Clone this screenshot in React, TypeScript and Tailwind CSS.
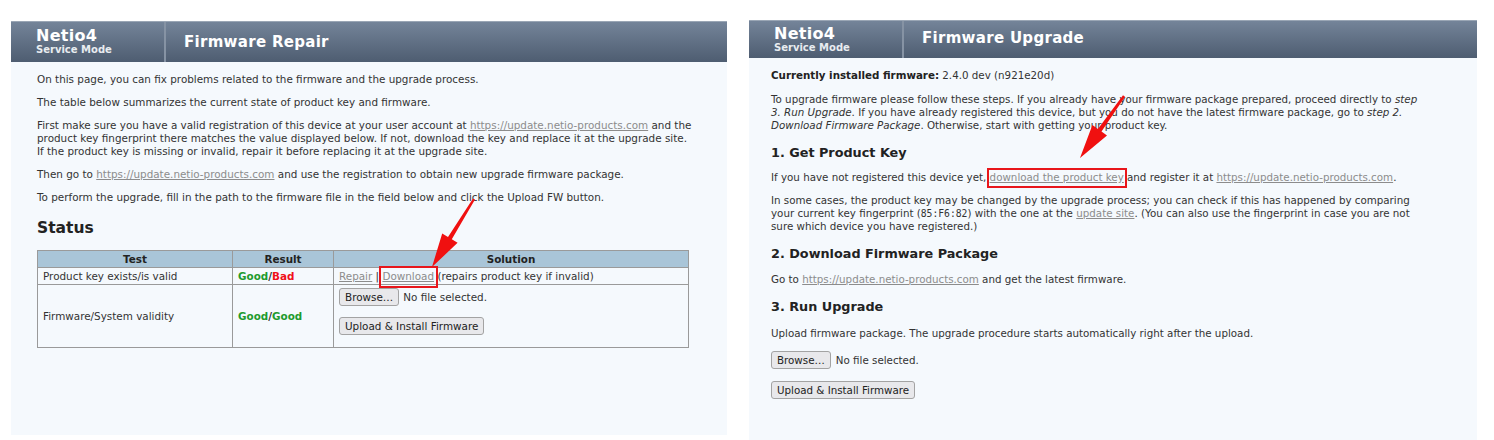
import React from "react";

const link = "text-[#8c8c8c] underline";
const btn =
  "inline-flex items-center h-[18px] px-[5px] border border-[#a3a3a3] rounded-[3px] bg-[#e8e8eb] text-[#222] leading-none";

function Header({ title, h, tpad }: { title: string; h: string; tpad: string }) {
  return (
    <div
      className={`flex ${h} bg-gradient-to-b from-[#748499] to-[#4e5d71] border-t border-[#9aa6b5] text-white`}
    >
      <div className="w-[155px] pl-[25px] flex flex-col justify-center border-r-2 border-[#8693a4]">
        <div className="text-[16px] font-bold leading-[16px] tracking-[0.3px]">Netio4</div>
        <div className="text-[10px] font-bold leading-[12px] text-[#e8ecf0]">Service Mode</div>
      </div>
      <div className={`flex items-center pl-[18px] text-[15px] font-bold tracking-[0.3px] ${tpad}`}>
        {title}
      </div>
    </div>
  );
}

function Boxed({ children, cls }: { children: React.ReactNode; cls: string }) {
  return (
    <span className="relative">
      {children}
      <span className={`absolute border-2 border-[#e8161b] ${cls}`} />
    </span>
  );
}

export default function App() {
  return (
    <div className="relative w-[1494px] h-[440px] bg-white flex font-['DejaVu_Sans',sans-serif] text-[10.4px] leading-[13px] text-[#333]">
      {/* Left panel */}
      <div className="ml-[11px] mt-[21px] w-[716px] h-[414px] bg-[#f5f9fd] flex flex-col">
        <Header title="Firmware Repair" h="h-[41px]" tpad="" />
        <div className="pl-[26px] pt-[11px] flex flex-col gap-[10px]">
          <p>On this page, you can fix problems related to the firmware and the upgrade process.</p>
          <p>The table below summarizes the current state of product key and firmware.</p>
          <p>
            First make sure you have a valid registration of this device at your user account at{" "}
            <span className={link}>https://update.netio-products.com</span> and the
            <br />
            product key fingerprint there matches the value displayed below. If not, download the key and replace it at the upgrade site.
            <br />
            If the product key is missing or invalid, repair it before replacing it at the upgrade site.
          </p>
          <p>
            Then go to <span className={link}>https://update.netio-products.com</span> and use the registration to obtain new upgrade firmware package.
          </p>
          <p>To perform the upgrade, fill in the path to the firmware file in the field below and click the Upload FW button.</p>
          <h2 className="text-[15.5px] font-bold leading-[18px] text-[#222] mt-[5px]">Status</h2>
          <table className="mt-[3px] w-[652px] border-collapse border border-[#9a9a9a]">
            <thead>
              <tr className="bg-[#a9c5d8] h-[17px]">
                <th className="w-[195px] border border-[#9a9a9a] font-bold text-[#222] p-0 leading-[15px]">Test</th>
                <th className="w-[101px] border border-[#9a9a9a] font-bold text-[#222] p-0 leading-[15px]">Result</th>
                <th className="border border-[#9a9a9a] font-bold text-[#222] p-0 leading-[15px]">Solution</th>
              </tr>
            </thead>
            <tbody>
              <tr className="h-[17px]">
                <td className="border border-[#9a9a9a] px-[5px] py-0">Product key exists/is valid</td>
                <td className="border border-[#9a9a9a] px-[5px] py-0 font-bold">
                  <span className="text-[#1e9b2e]">Good</span>/<span className="text-[#f0101a]">Bad</span>
                </td>
                <td className="border border-[#9a9a9a] px-[5px] py-0">
                  <span className={link}>Repair</span> |{" "}
                  <Boxed cls="-left-[3px] -right-[4px] -top-[4px] -bottom-[6px]">
                    <span className={link}>Download</span>
                  </Boxed>{" "}
                  (repairs product key if invalid)
                </td>
              </tr>
              <tr className="h-[63px]">
                <td className="border border-[#9a9a9a] px-[5px] py-0">Firmware/System validity</td>
                <td className="border border-[#9a9a9a] px-[5px] py-0 font-bold">
                  <span className="text-[#1e9b2e]">Good</span>/<span className="text-[#1e9b2e]">Good</span>
                </td>
                <td className="border border-[#9a9a9a] px-[5px] pt-[3px] pb-[11px] align-top">
                  <div className="flex items-center gap-[4px]">
                    <span className={btn}>Browse…</span>
                    <span>No file selected.</span>
                  </div>
                  <div className="mt-[11px]">
                    <span className={btn}>Upload &amp; Install Firmware</span>
                  </div>
                </td>
              </tr>
            </tbody>
          </table>
        </div>
      </div>

      {/* Right panel */}
      <div className="ml-[22px] mt-[20px] w-[728px] h-[420px] bg-[#f5f9fd] flex flex-col text-[10.3px]">
        <Header title="Firmware Upgrade" h="h-[38px]" tpad="pb-[3px]" />
        <div className="pl-[22px] pt-[11px] flex flex-col">
          <p>
            <b className="text-[#222]">Currently installed firmware:</b> 2.4.0 dev (n921e20d)
          </p>
          <p className="mt-[11px]">
            To upgrade firmware please follow these steps. If you already have your firmware package prepared, proceed directly to{" "}
            <i>step</i>
            <br />
            <i>3. Run Upgrade</i>. If you have already registered this device, but you do not have the latest firmware package, go to{" "}
            <i>step 2.</i>
            <br />
            <i>Download Firmware Package</i>. Otherwise, start with getting your product key.
          </p>
          <h3 className="mt-[13px] text-[12.8px] font-bold leading-[15px] text-[#222]">1. Get Product Key</h3>
          <p className="mt-[11px]">
            If you have not registered this device yet,{" "}
            <Boxed cls="-left-[3px] -right-[3px] -top-[3px] -bottom-[5px]">
              <span className={link}>download the product key</span>
            </Boxed>{" "}
            and register it at <span className={link}>https://update.netio-products.com</span>.
          </p>
          <p className="mt-[10px]">
            In some cases, the product key may be changed by the upgrade process; you can check if this has happened by comparing
            <br />
            your current key fingerprint (<span className="font-['DejaVu_Sans_Mono',monospace] text-[9.7px]">85:F6:82</span>) with the one at the{" "}
            <span className={link}>update site</span>. (You can also use the fingerprint in case you are not
            <br />
            sure which device you have registered.)
          </p>
          <h3 className="mt-[13px] text-[12.8px] font-bold leading-[15px] text-[#222]">2. Download Firmware Package</h3>
          <p className="mt-[12px]">
            Go to <span className={link}>https://update.netio-products.com</span> and get the latest firmware.
          </p>
          <h3 className="mt-[13px] text-[12.8px] font-bold leading-[15px] text-[#222]">3. Run Upgrade</h3>
          <p className="mt-[13px]">Upload firmware package. The upgrade procedure starts automatically right after the upload.</p>
          <div className="mt-[11px] flex items-center gap-[5px]">
            <span className={btn}>Browse…</span>
            <span>No file selected.</span>
          </div>
          <div className="mt-[12px]">
            <span className={btn}>Upload &amp; Install Firmware</span>
          </div>
        </div>
      </div>

      {/* annotation arrows */}
      <svg className="absolute left-0 top-0 pointer-events-none" width="1494" height="440">
        <polygon
          fill="#f01010"
          points="475,199.6 451.8,239.3 457.6,242.8 432,267 442.2,233.4 448,236.9 473,198.4"
        />
        <polygon
          fill="#f01010"
          points="1125,96.7 1101.5,131.6 1107,135.5 1080,158 1092.4,125.1 1097.9,129 1123,95.3"
        />
      </svg>
    </div>
  );
}
